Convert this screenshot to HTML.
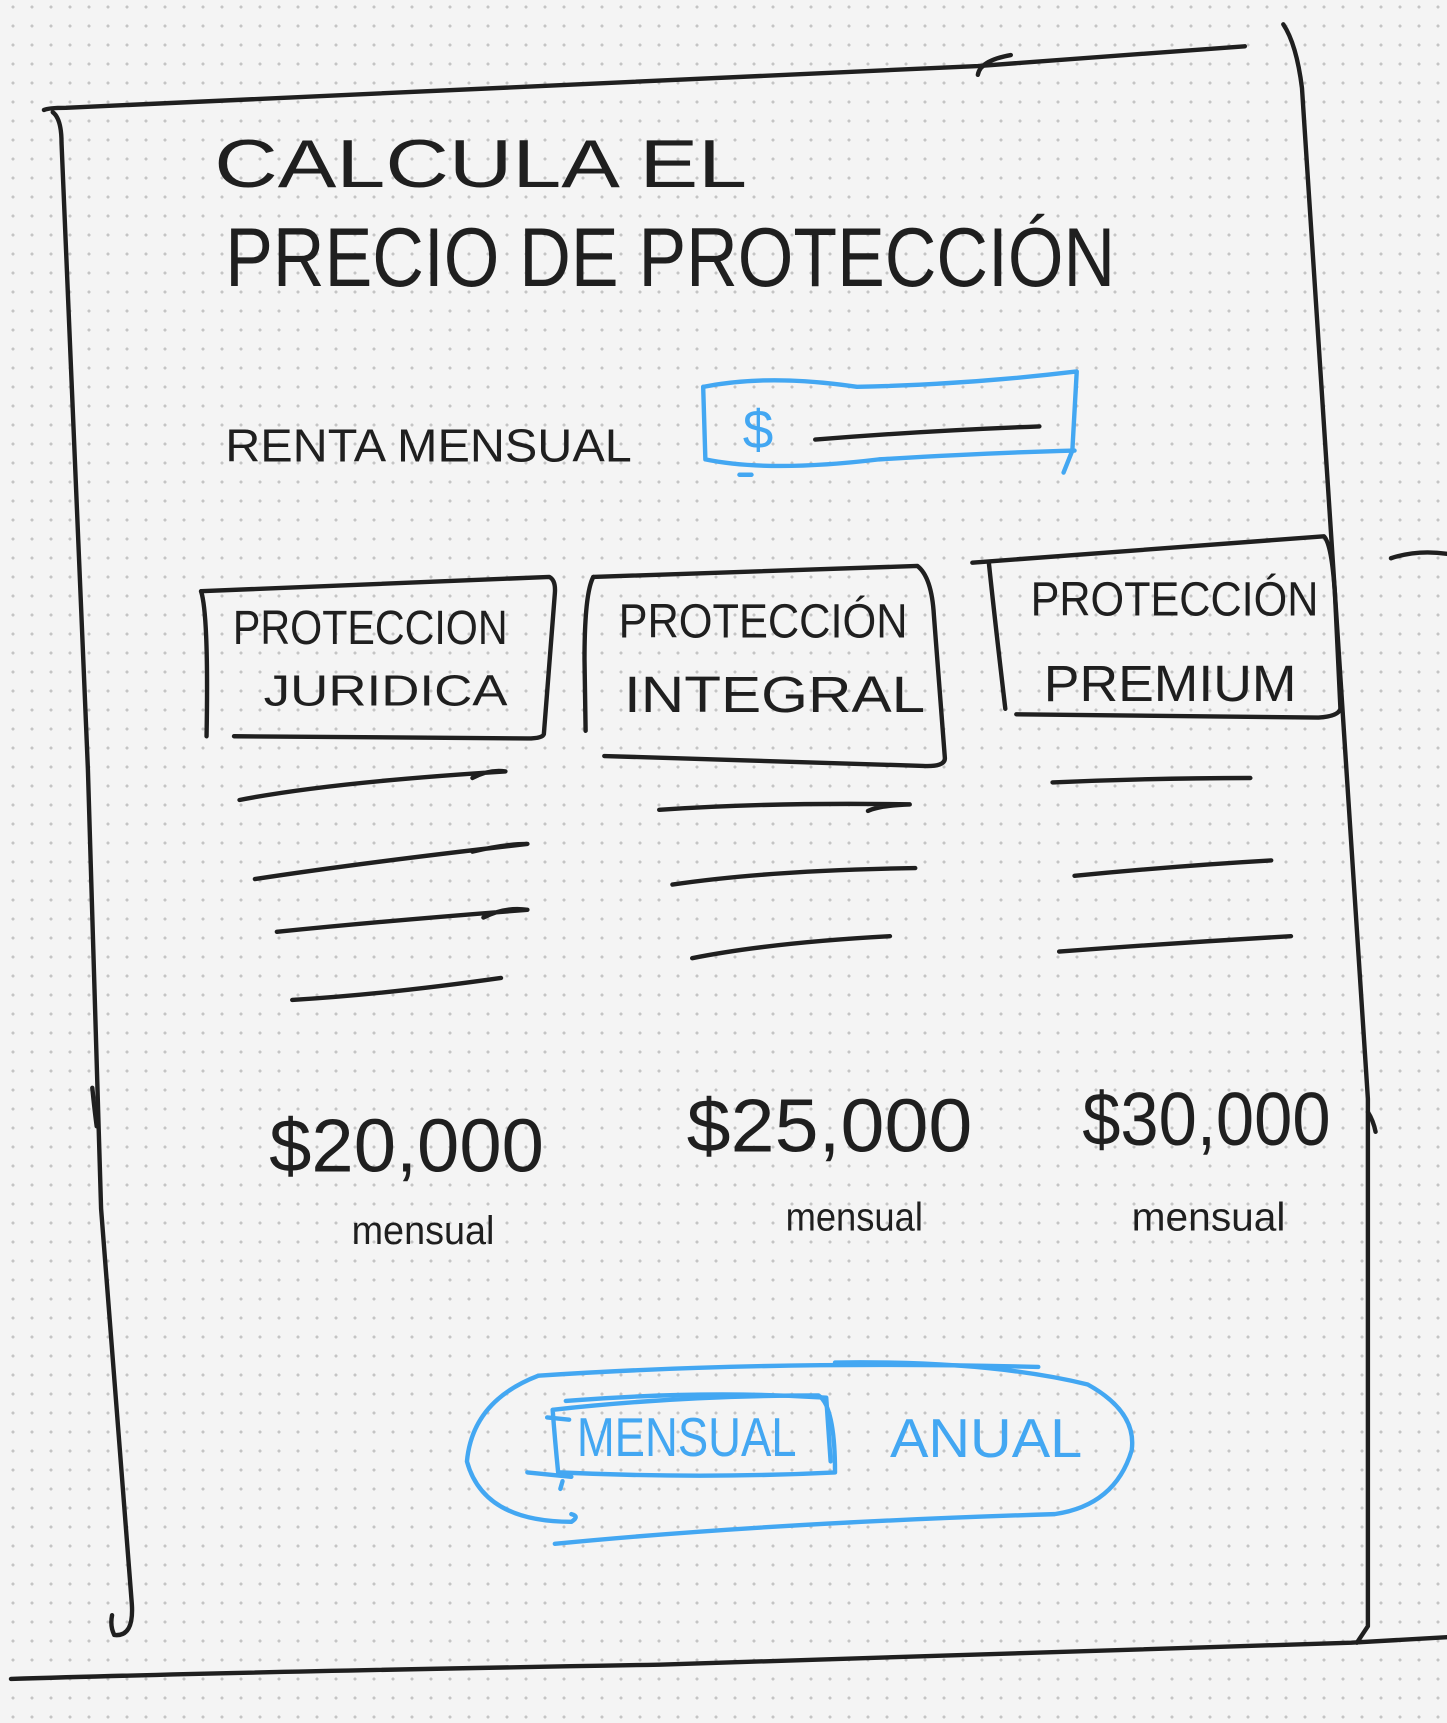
<!DOCTYPE html>
<html><head><meta charset="utf-8">
<style>
html,body{margin:0;padding:0;}
body{width:1447px;height:1723px;overflow:hidden;background-color:#f4f4f4;
background-image:radial-gradient(circle,#c4c4c4 1.3px,transparent 1.8px);
background-size:19px 19px;background-position:3.5px -2.5px;}
svg{position:absolute;left:0;top:0;}
text{font-family:"Liberation Sans",sans-serif;}
</style></head><body>
<svg width="1447" height="1723" viewBox="0 0 1317 1568" xmlns="http://www.w3.org/2000/svg">
<g fill="none" stroke="#1f1f1f" stroke-width="4" stroke-linecap="round" stroke-linejoin="round">
<!-- frame -->
<path d="M40 100 Q44 98 60 98 L890 60 L1133 42"/>
<path d="M890 68 Q892 55 920 50"/>
<path d="M48 102 Q56 108 56 130 L80 700 L92 1100 L120 1460 Q122 1490 104 1488 Q100 1480 102 1470"/>
<path d="M84 990 Q86 1010 88 1025"/>
<path d="M1168 22 Q1180 40 1185 80 L1245 1000 L1245 1480 L1235 1495"/>
<path d="M1245 1012 Q1250 1020 1252 1030"/>
<path d="M10 1528 Q200 1522 600 1515 L1230 1495 L1317 1490"/>
<path d="M1266 508 Q1290 500 1317 504"/>
<!-- card boxes -->
<path d="M183 538 L500 525 Q506 528 505 540 L495 668 Q494 672 480 672 L213 670"/>
<path d="M183 538 Q190 560 188 670"/>
<path d="M540 525 L835 515 Q848 525 850 560 L860 690 Q860 698 840 697 L550 688"/>
<path d="M540 525 Q532 540 532 600 L533 665"/>
<path d="M885 512 L1205 488 Q1212 495 1215 540 L1220 645 Q1218 652 1200 653 L925 650"/>
<path d="M900 512 Q905 560 915 645"/>
<!-- lines col1 -->
<path d="M218 728 Q300 712 460 702 Q445 700 430 708"/>
<path d="M232 800 Q330 785 480 768 Q460 768 430 775"/>
<path d="M252 848 Q350 838 480 828 Q460 825 440 835"/>
<path d="M266 910 Q350 905 456 890"/>
<!-- lines col2 -->
<path d="M600 737 Q700 730 828 732 Q800 733 790 738"/>
<path d="M612 805 Q700 792 833 790"/>
<path d="M630 872 Q700 858 810 852"/>
<!-- lines col3 -->
<path d="M958 712 Q1050 708 1138 708"/>
<path d="M978 797 Q1070 788 1157 783"/>
<path d="M964 866 Q1070 858 1175 852"/>
</g>
<!-- blue elements -->
<g fill="none" stroke="#43a7f2" stroke-width="4" stroke-linecap="round" stroke-linejoin="round">
<path d="M640 352 Q700 340 780 352 Q880 350 980 338 L976 410 L968 430"/>
<path d="M640 352 L642 418 Q700 430 800 418 Q900 412 978 410"/>
<path d="M673 432 L684 432"/>
<path d="M490 1252 Q700 1238 945 1244"/>
<path d="M760 1240 Q900 1238 990 1260 Q1035 1285 1030 1320 Q1015 1370 960 1378 Q700 1386 505 1405"/>
<path d="M490 1252 Q430 1275 425 1330 Q440 1385 520 1385 Q528 1380 520 1378"/>
<path d="M503 1283 Q620 1270 745 1270 Q760 1280 760 1340 Q640 1346 508 1340 Q505 1310 503 1283"/>
<path d="M515 1275 Q640 1265 752 1272 L756 1330"/>
<path d="M498 1290 L518 1292 M480 1340 L520 1344 M512 1348 L510 1355"/>
</g>
<g fill="#1f1f1f">
<text x="195" y="170" font-size="62" textLength="485" lengthAdjust="spacingAndGlyphs">CALCULA EL</text>
<text x="205" y="260" font-size="76" textLength="810" lengthAdjust="spacingAndGlyphs">PRECIO DE PROTECCIÓN</text>
<text x="205" y="420" font-size="42" textLength="370" lengthAdjust="spacingAndGlyphs">RENTA MENSUAL</text>
<text x="212" y="586" font-size="44" textLength="250" lengthAdjust="spacingAndGlyphs">PROTECCION</text>
<text x="240" y="642" font-size="40" textLength="222" lengthAdjust="spacingAndGlyphs">JURIDICA</text>
<text x="563" y="580" font-size="44" textLength="263" lengthAdjust="spacingAndGlyphs">PROTECCIÓN</text>
<text x="568" y="648" font-size="46" textLength="274" lengthAdjust="spacingAndGlyphs">INTEGRAL</text>
<text x="938" y="560" font-size="44" textLength="262" lengthAdjust="spacingAndGlyphs">PROTECCIÓN</text>
<text x="950" y="638" font-size="46" textLength="230" lengthAdjust="spacingAndGlyphs">PREMIUM</text>
<text x="245" y="1066" font-size="68" textLength="250" lengthAdjust="spacingAndGlyphs">$20,000</text>
<text x="625" y="1048" font-size="68" textLength="260" lengthAdjust="spacingAndGlyphs">$25,000</text>
<text x="985" y="1042" font-size="68" textLength="226" lengthAdjust="spacingAndGlyphs">$30,000</text>
<text x="320" y="1132" font-size="36" textLength="130" lengthAdjust="spacingAndGlyphs">mensual</text>
<text x="715" y="1120" font-size="36" textLength="125" lengthAdjust="spacingAndGlyphs">mensual</text>
<text x="1030" y="1120" font-size="36" textLength="140" lengthAdjust="spacingAndGlyphs">mensual</text>
</g>
<path d="M742 400 Q840 392 946 388" fill="none" stroke="#1f1f1f" stroke-width="4" stroke-linecap="round"/>
<g fill="#43a7f2">
<text x="676" y="408" font-size="50">$</text>
<text x="525" y="1325" font-size="50" textLength="200" lengthAdjust="spacingAndGlyphs">MENSUAL</text>
<text x="810" y="1326" font-size="50" textLength="175" lengthAdjust="spacingAndGlyphs">ANUAL</text>
</g>
</svg>
</body></html>
